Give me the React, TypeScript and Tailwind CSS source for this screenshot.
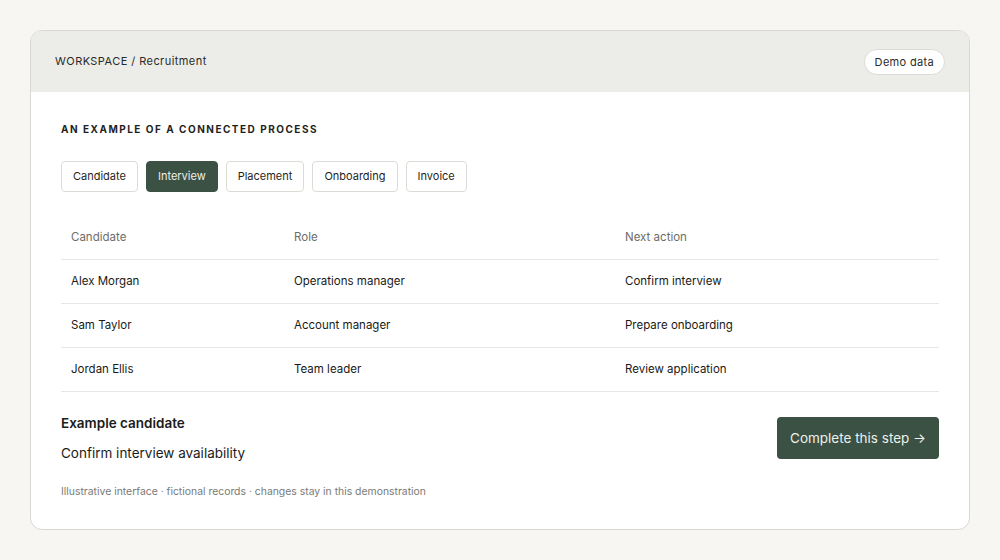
import React, { useState } from "react";

const steps = ["Candidate", "Interview", "Placement", "Onboarding", "Invoice"];

const rows = [
  { name: "Alex Morgan", role: "Operations manager", action: "Confirm interview" },
  { name: "Sam Taylor", role: "Account manager", action: "Prepare onboarding" },
  { name: "Jordan Ellis", role: "Team leader", action: "Review application" },
];

const App = () => {
  const [active, setActive] = useState("Interview");

  return (
    <div className="min-h-[560px] w-full bg-[#f7f6f2] px-[30px] pt-[30px] font-['Inter',sans-serif] text-[#1c1c1a]">
      <div className="overflow-hidden rounded-[12px] border border-[#d9d9d3] bg-white">
        {/* header bar */}
        <div className="flex h-[61px] items-center justify-between bg-[#ecede8] pl-[24px] pr-[24px]">
          <span className="text-[11px] tracking-[0.04em] text-[#2a2a28]">WORKSPACE / Recruitment</span>
          <span className="rounded-full border border-[#dcdcd6] bg-white px-[10px] py-[5px] text-[11px] leading-[14px] tracking-[0.03em] text-[#2a2a28]">
            Demo data
          </span>
        </div>

        <div className="px-[30px] pt-[31px] pb-[31px]">
          <h2 className="text-[10px] font-bold leading-[12px] tracking-[0.15em] text-[#1f1f1d]">
            AN EXAMPLE OF A CONNECTED PROCESS
          </h2>

          <div className="mt-[26px] flex gap-[8px]">
            {steps.map((s) => (
              <button
                key={s}
                onClick={() => setActive(s)}
                className={`h-[31px] rounded-[4px] border px-[11px] text-[11px] ${
                  active === s
                    ? "border-[#3a5143] bg-[#3a5143] text-[#eef0ea]"
                    : "border-[#dcdcd6] bg-white text-[#1f1f1d]"
                }`}
              >
                {s}
              </button>
            ))}
          </div>

          <div className="mt-[24px] text-[11.5px]">
            <div className="grid h-[44px] grid-cols-[223px_331px_1fr] items-center border-b border-[#e6e6e2] text-[#6d6d69]">
              <span className="pl-[10px]">Candidate</span>
              <span className="pl-[10px]">Role</span>
              <span className="pl-[10px]">Next action</span>
            </div>
            {rows.map((r) => (
              <div
                key={r.name}
                className="grid h-[44px] grid-cols-[223px_331px_1fr] items-center border-b border-[#e6e6e2] text-[#1a1a18]"
              >
                <span className="pl-[10px]">{r.name}</span>
                <span className="pl-[10px]">{r.role}</span>
                <span className="pl-[10px]">{r.action}</span>
              </div>
            ))}
          </div>

          <div className="mt-[23px] flex items-center justify-between">
            <div>
              <p className="text-[13.5px] font-semibold leading-[16px]">Example candidate</p>
              <p className="mt-[14px] text-[13.5px] leading-[16px]">Confirm interview availability</p>
            </div>
            <button className="h-[42px] rounded-[4px] bg-[#3a5143] px-[13px] text-[13.5px] text-[#eef0ea]">
              Complete this step →
            </button>
          </div>

          <p className="mt-[25px] text-[10.4px] leading-[12px] text-[#7a7a76]">
            Illustrative interface · fictional records · changes stay in this demonstration
          </p>
        </div>
      </div>
    </div>
  );
};

export default App;
